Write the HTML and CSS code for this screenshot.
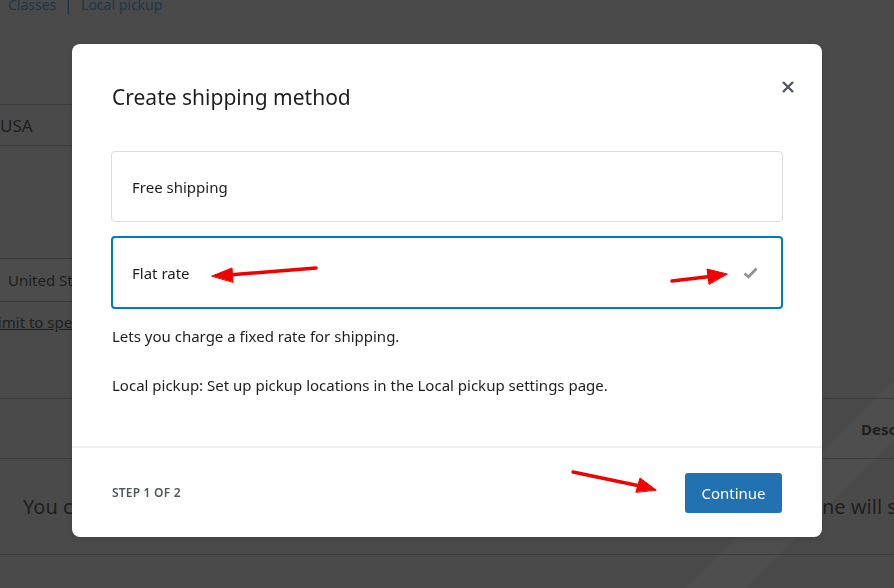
FILE: index.html
```html
<!DOCTYPE html>
<html lang="en">

<head>
    <meta charset="UTF-8">
    <meta name="viewport" content="width=device-width, initial-scale=1.0">
    <title>Create shipping method</title>
    <link rel="stylesheet" href="styles.css">
</head>

<body>
    <!-- page behind the modal -->
    <div class="page">
        <div class="subnav"><span>Classes</span><span class="sep">|</span><span>Local pickup</span></div>
        <div class="zone-row zone-name"><span>USA</span></div>
        <div class="zone-row zone-regions"></div>
        <div class="zone-row zone-region"><span>United States (US)</span></div>
        <div class="zone-limit"><a href="#">Limit to specific ZIP/postcodes</a></div>
        <div class="methods-head"><span>Description</span></div>
        <div class="methods-empty">
            <span class="empty-left">You can add multiple shipping methods within this zone.</span>
            <span class="empty-right">ne will see them.</span>
        </div>
    </div>

    <div class="backdrop">
        <div class="modal">
            <div class="modal-header">
                <h2 class="modal-title">Create shipping method</h2>
                <button class="modal-close" aria-label="Close">
                    <svg width="14" height="14" viewBox="0 0 14 14">
                        <path d="M2 2 L12 12 M12 2 L2 12" stroke="#50575e" stroke-width="2.4" fill="none" />
                    </svg>
                </button>
            </div>

            <div class="modal-body">
                <div class="options">
                    <div class="option">Free shipping</div>
                    <div class="option selected">
                        <span>Flat rate</span>
                        <svg class="check" width="15" height="12" viewBox="0 0 15 12">
                            <path d="M1.5 6.5 L5.5 10 L13.5 1.5" stroke="#8c8f94" stroke-width="2.6" fill="none" />
                        </svg>
                    </div>
                </div>
                <p class="option-desc">Lets you charge a fixed rate for shipping.</p>
                <p class="option-note">Local pickup: Set up pickup locations in the Local pickup settings page.</p>
            </div>

            <div class="modal-footer">
                <span class="step">Step 1 of 2</span>
                <button class="btn-primary">Continue</button>
            </div>
        </div>
    </div>

    <!-- red annotation arrows -->
    <svg class="annotations" width="894" height="588" viewBox="0 0 894 588">
        <g fill="#f20000" stroke="#f20000" stroke-linecap="round">
            <line x1="316" y1="268" x2="228" y2="275" stroke-width="3.4" />
            <polygon points="212,276 232,268 233,282" stroke-width="1" />
            <line x1="672" y1="281" x2="710" y2="276.5" stroke-width="3.4" />
            <polygon points="727,274 707,269 709,284" stroke-width="1" />
            <line x1="573" y1="472" x2="640" y2="486" stroke-width="3.4" />
            <polygon points="656,490 640,478 636,492" stroke-width="1" />
        </g>
    </svg>
</body>

</html>
```

FILE: styles.css
```css
body {
    margin: 0;
    padding: 0;
    width: 894px;
    height: 588px;
    overflow: hidden;
    background-color: #4a4a4a;
    font-family: "Noto Sans", "Open Sans", sans-serif;
    color: #1e1e1e;
}

/* background page */
.page {
    height: 588px;
    overflow: hidden;
    background: linear-gradient(135deg, transparent 0, transparent 86%, rgba(255, 255, 255, 0.025) 86%, rgba(255, 255, 255, 0.025) 90%, transparent 90%);
}

.subnav {
    margin-top: -5px;
    padding-left: 8px;
    height: 20px;
    font-size: 14px;
    line-height: 20px;
    color: #1f364a;
}

.subnav .sep {
    margin: 0 9px 0 8px;
    color: #1c2c3a;
}

.zone-row {
    width: 72px;
    border-bottom: 1px solid #3b3b3b;
    box-sizing: border-box;
    font-size: 15px;
    white-space: nowrap;
    overflow: hidden;
}

.zone-name {
    margin-top: 89px;
    border-top: 1px solid #3b3b3b;
    height: 42px;
    line-height: 41px;
    font-size: 17px;
}

.zone-regions {
    height: 113px;
}

.zone-region {
    height: 43px;
    line-height: 42px;
    padding-left: 8px;
    background: #4c4c4c;
}

.zone-limit {
    width: 72px;
    height: 96px;
    overflow: hidden;
    white-space: nowrap;
    font-size: 15px;
    line-height: 40px;
}

.zone-limit a {
    display: inline-block;
    margin-left: -10px;
    color: #1e1e1e;
}

.methods-head {
    height: 61px;
    border-top: 1px solid #3b3b3b;
    border-bottom: 1px solid #3b3b3b;
    box-sizing: border-box;
    display: flex;
    align-items: center;
    padding-left: 861px;
    white-space: nowrap;
    font-size: 15px;
    font-weight: bold;
}

.methods-empty {
    height: 96px;
    border-bottom: 1px solid #3b3b3b;
    box-sizing: border-box;
    display: flex;
    align-items: center;
    padding-left: 23px;
    white-space: nowrap;
    font-size: 20px;
}

.empty-left {
    flex-shrink: 0;
    width: 799px;
    overflow: hidden;
}

.empty-right {
    flex-shrink: 0;
}

/* modal */
.backdrop {
    position: fixed;
    inset: 0;
    display: flex;
    justify-content: center;
    align-items: center;
    padding-bottom: 7px;
}

.modal {
    width: 750px;
    background: #fff;
    border-radius: 8px;
    box-shadow: 0 2px 6px rgba(0, 0, 0, 0.1);
}

.modal-header {
    position: relative;
    padding: 38px 40px 0 40px;
}

.modal-title {
    margin: 0;
    font-size: 21px;
    font-weight: normal;
    line-height: 30px;
    color: #1e1e1e;
}

.modal-close {
    position: absolute;
    top: 36px;
    right: 27px;
    width: 14px;
    height: 14px;
    padding: 0;
    border: 0;
    background: none;
    display: flex;
}

.modal-body {
    padding: 39px 39px 0 39px;
}

.options {
    display: flex;
    flex-direction: column;
    gap: 14px;
}

.option {
    box-sizing: border-box;
    height: 71px;
    border: 1px solid #dcdcde;
    border-radius: 4px;
    padding: 0 20px;
    display: flex;
    align-items: center;
    justify-content: space-between;
    font-size: 15px;
    color: #1e1e1e;
}

.option.selected {
    height: 73px;
    border: 2px solid #007cba;
    padding: 0 23px 0 19px;
}

.check {
    margin-top: 1px;
}

.option-desc,
.option-note {
    margin: 0;
    padding-left: 1px;
    font-size: 15px;
    line-height: 22px;
    color: #1e1e1e;
}

.option-desc {
    margin-top: 16px;
}

.option-note {
    margin-top: 27px;
}

.modal-footer {
    margin-top: 50px;
    height: 89px;
    border-top: 2px solid #f0f0f0;
    padding: 0 40px;
    display: flex;
    align-items: center;
    justify-content: space-between;
}

.step {
    text-transform: uppercase;
    font-size: 12px;
    font-weight: 600;
    color: #50575e;
    letter-spacing: 0.2px;
}

.btn-primary {
    width: 97px;
    height: 40px;
    border: 0;
    border-radius: 3px;
    background: #2271b1;
    color: #fff;
    font-family: inherit;
    font-size: 15px;
    cursor: pointer;
}

.annotations {
    position: fixed;
    top: 0;
    left: 0;
    pointer-events: none;
}
```
